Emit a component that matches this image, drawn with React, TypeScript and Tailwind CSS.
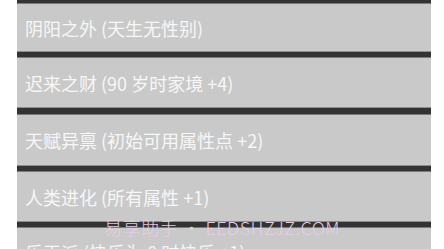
const talents = [
  { label: '阴阳之外 (天生无性别)', h: 'h-[47px]' },
  { label: '迟来之财 (90 岁时家境 +4)', h: 'h-[49px]' },
  { label: '天赋异禀 (初始可用属性点 +2)', h: 'h-[50px]' },
  { label: '人类进化 (所有属性 +1)', h: 'h-[49px]' },
  { label: '乐天派 (快乐为 0 时快乐 +1)', h: 'h-[49px]' },
];

function Divider({ className = '' }: { className?: string }) {
  return (
    <div className={`flex flex-col ${className}`}>
      <div className="h-px bg-[#8d8d8d]" />
      <div className="flex-1 bg-[#333333]" />
      <div className="h-px bg-[#7a7a7a]" />
    </div>
  );
}

export default function App() {
  return (
    <div
      className="relative h-[249px] w-[444px] overflow-hidden bg-white pl-[17px] pr-[13px]"
      style={{ fontFamily: '"Noto Sans CJK SC", "Noto Sans", sans-serif' }}
    >
      <div className="flex flex-col">
        <div className="flex h-[4px] flex-col">
          <div className="flex-1 bg-[#333333]" />
          <div className="h-px bg-[#7a7a7a]" />
        </div>
        {talents.map((t, i) => (
          <div key={t.label} className="flex flex-col">
            <div className={`flex ${t.h} bg-[#c9c9c9] pl-2 ${i === 4 ? 'items-start pt-[15px]' : 'items-center'}`}>
              <span className="text-[18px] font-normal leading-none text-[#f7f7f7]">{t.label}</span>
            </div>
            {i < 4 && <Divider className={i === 1 ? 'h-[8px]' : 'h-[7px]'} />}
          </div>
        ))}
      </div>

      {/* watermark */}
      <div
        className="absolute left-[104px] top-[214px] whitespace-nowrap text-[18px] font-light tracking-[0.5px] text-[#e6cde3]"
        style={{ fontFamily: '"Noto Sans CJK SC", Lato, sans-serif' }}
      >
        易享助手 • EEDSHZJZ.COM
      </div>
    </div>
  );
}
